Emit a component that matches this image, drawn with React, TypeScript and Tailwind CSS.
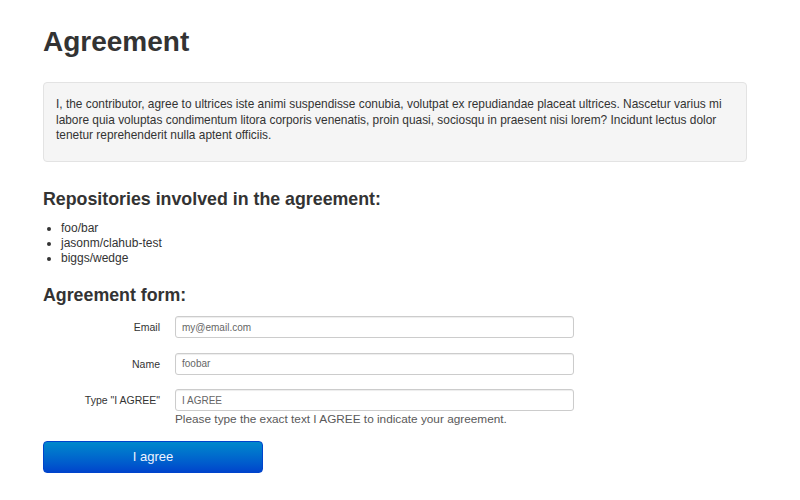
const REPOS = ["foo/bar", "jasonm/clahub-test", "biggs/wedge"];

const FIELDS = [
  { label: "Email", value: "my@email.com" },
  { label: "Name", value: "foobar" },
  { label: 'Type "I AGREE"', value: "I AGREE", help: "Please type the exact text I AGREE to indicate your agreement." },
];

export default function App() {
  return (
    <div className="min-h-[500px] bg-white px-[43px] pt-[24px] text-[#333] font-['Liberation_Sans',Arial,sans-serif]">
      <h1 className="text-[28px] font-bold leading-[36px]">Agreement</h1>

      {/* agreement text */}
      <div className="mt-[22px] w-[704px] h-[80px] rounded-[4px] border border-[#e3e3e3] bg-[#f5f5f5] px-[12px] pt-[14px] text-[11.9px] leading-[15.5px]">
        I, the contributor, agree to ultrices iste animi suspendisse conubia, volutpat ex repudiandae placeat ultrices. Nascetur varius mi labore quia voluptas condimentum litora corporis venenatis, proin quasi, sociosqu in praesent nisi lorem? Incidunt lectus dolor tenetur reprehenderit nulla aptent officiis.
      </div>

      <h2 className="mt-[26px] text-[17.8px] font-bold leading-[22px]">Repositories involved in the agreement:</h2>
      <ul className="mt-[11px] list-disc pl-[18px] text-[12px] leading-[15px]">
        {REPOS.map((r) => (
          <li key={r}>{r}</li>
        ))}
      </ul>

      <h2 className="mt-[18px] text-[17.8px] font-bold leading-[22px]">Agreement form:</h2>

      <div className="mt-[10px] flex flex-col gap-[14.5px]">
        {FIELDS.map((f) => (
          <div key={f.label} className="flex items-start">
            <label className="w-[117px] pt-[4px] text-right text-[10.5px] leading-[14px]">{f.label}</label>
            <div className="ml-[15px]">
              <div className="flex h-[22px] w-[399px] items-center rounded-[3px] border border-[#ccc] px-[6px] text-[10px] text-[#666] shadow-[inset_0_1px_1px_rgba(0,0,0,0.075)]">
                {f.value}
              </div>
              {f.help && <p className="mt-[1px] text-[11.8px] leading-[15px] text-[#595959]">{f.help}</p>}
            </div>
          </div>
        ))}
      </div>

      <button className="mt-[14px] h-[32px] w-[220px] rounded-[4px] border border-[#0044cc] bg-gradient-to-b from-[#0088cc] to-[#0044cc] text-[13px] text-[#eef4ff]">
        I agree
      </button>
    </div>
  );
}
